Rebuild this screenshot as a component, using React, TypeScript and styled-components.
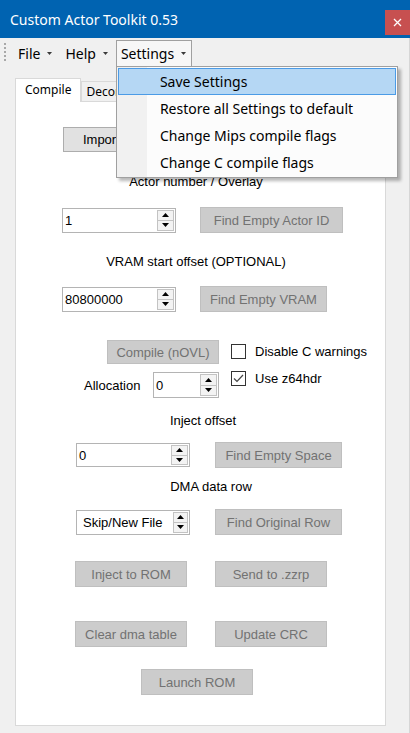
import React from "react";
import styled, { createGlobalStyle } from "styled-components";

const GlobalStyle = createGlobalStyle`
  html, body { margin: 0; padding: 0; background: #f0f0f0; }
  body { overflow: hidden; }
  *, *::before, *::after { box-sizing: border-box; }
`;

const UI = `"Noto Sans", "Open Sans", sans-serif`;
const FORM = `"Liberation Sans", Arial, sans-serif`;

const Window = styled.div`
  width: 410px;
  height: 733px;
  display: flex;
  flex-direction: column;
  background: #f0f0f0;
  overflow: hidden;
`;

const TitleBar = styled.header`
  flex: none;
  height: 38px;
  display: flex;
  align-items: flex-start;
  background: #0063b1;
  color: #fff;
  font-family: ${UI};
  font-size: 14px;
`;

const Title = styled.div`
  flex: 1;
  padding: 2px 0 0 10px;
  line-height: 36px;
  white-space: nowrap;
`;

const CloseButton = styled.div`
  width: 25px;
  height: 25px;
  margin-top: 10px;
  background: #c75050;
  display: grid;
  place-items: center;
`;

const Body = styled.div`
  flex: 1;
  display: flex;
  flex-direction: column;
  border-right: 1px solid #d6d6d6;
  min-height: 0;
`;

const MenuBar = styled.nav`
  flex: none;
  height: 32px;
  display: flex;
  align-items: flex-start;
  padding: 2px 0 0 4px;
  font-family: ${UI};
  font-size: 14px;
  color: #000;
  position: relative;
  z-index: 5;
`;

const Grip = styled.div`
  width: 2px;
  height: 19px;
  margin: 3px 7px 0 0;
  background: repeating-linear-gradient(to bottom, #a8a8a8 0 2px, transparent 2px 4px);
`;

const MenuItem = styled.div<{ $open?: boolean }>`
  position: relative;
  display: flex;
  align-items: center;
  gap: 7px;
  height: 27px;
  padding: 0 5px 0 4px;
  margin-right: 2px;
  line-height: 25px;
  border: 1px solid ${(p) => (p.$open ? "#a0a0a0" : "transparent")};
  border-bottom-color: transparent;
  background: ${(p) => (p.$open ? "#f7f7f7" : "transparent")};
  white-space: nowrap;
`;

const Dropdown = styled.div`
  position: absolute;
  top: 25px;
  left: -1px;
  width: 282px;
  padding: 1px;
  border: 1px solid #a0a0a0;
  background: linear-gradient(to right, #f1f1f1 0, #f1f1f1 30px, #fcfcfc 30px);
  box-shadow: 3px 3px 3px rgba(0, 0, 0, 0.28);
  display: flex;
  flex-direction: column;
`;

const DropItem = styled.div<{ $active?: boolean }>`
  height: 27px;
  padding-left: 41px;
  line-height: 25px;
  border: 1px solid ${(p) => (p.$active ? "#4b9be6" : "transparent")};
  background: ${(p) => (p.$active ? "#b5d7f4" : "transparent")};
  white-space: nowrap;
`;

const TabArea = styled.div`
  flex: 1;
  display: flex;
  flex-direction: column;
  padding: 8px 23px 7px 15px;
  min-height: 0;
`;

const TabStrip = styled.div`
  flex: none;
  height: 23px;
  display: flex;
  align-items: flex-end;
  position: relative;
  z-index: 1;
  font-family: ${UI};
  font-size: 12px;
  color: #000;
`;

const Tab = styled.div<{ $active?: boolean }>`
  height: ${(p) => (p.$active ? 24 : 20)}px;
  margin-bottom: ${(p) => (p.$active ? -1 : 0)}px;
  padding: ${(p) => (p.$active ? "0 9px" : "1px 8px 0 4px")};
  line-height: ${(p) => (p.$active ? 22 : 18)}px;
  background: ${(p) => (p.$active ? "#ffffff" : "#f0f0f0")};
  border: 1px solid #d9d9d9;
  border-bottom: none;
  margin-left: ${(p) => (p.$active ? 0 : 0)}px;
  white-space: nowrap;
`;

const Panel = styled.section`
  flex: 1;
  display: flex;
  flex-direction: column;
  background: #fff;
  border: 1px solid #d9d9d9;
  font-family: ${FORM};
  font-size: 13px;
  color: #000;
`;

const Row = styled.div<{ $mt: number; $pl: number; $gap?: number }>`
  display: flex;
  align-items: center;
  margin-top: ${(p) => p.$mt}px;
  padding-left: ${(p) => p.$pl}px;
  gap: ${(p) => p.$gap ?? 0}px;
`;

const Caption = styled.div<{ $mt: number; $cx: number }>`
  width: 300px;
  margin-top: ${(p) => p.$mt}px;
  margin-left: ${(p) => p.$cx - 150}px;
  text-align: center;
  line-height: 16px;
  white-space: nowrap;
`;

const Button = styled.button<{ $w: number; $h?: number }>`
  width: ${(p) => p.$w}px;
  height: ${(p) => p.$h ?? 26}px;
  padding: 0;
  font-family: ${FORM};
  font-size: 13px;
  text-align: center;
  white-space: nowrap;
  overflow: hidden;
  background: #e1e1e1;
  border: 1px solid #adadad;
  color: #000;
  &:disabled {
    background: #cccccc;
    border-color: #bfbfbf;
    color: #727272;
  }
`;

const Spinner = styled.div<{ $w: number; $h?: number }>`
  width: ${(p) => p.$w}px;
  height: ${(p) => p.$h ?? 25}px;
  display: flex;
  border: 1px solid #b4b4b4;
  background: #fff;
`;

const SpinValue = styled.div<{ $pad?: number }>`
  flex: 1;
  padding-left: ${(p) => p.$pad ?? 2}px;
  display: flex;
  align-items: center;
  white-space: nowrap;
  overflow: hidden;
`;

const SpinButtons = styled.div<{ $w?: number }>`
  width: ${(p) => p.$w ?? 17}px;
  margin: 1px 1px 1px 0;
  display: flex;
  flex-direction: column;
  border: 1px solid #c3c3c3;
  background: #f3f3f3;
`;

const SpinHalf = styled.div<{ $down?: boolean }>`
  flex: 1;
  display: grid;
  place-items: center;
  border-top: ${(p) => (p.$down ? "1px solid #c3c3c3" : "none")};
`;

const CompileBlock = styled.div`
  display: flex;
  margin-top: 28px;
  padding-left: 68px;
  gap: 12px;
`;

const LeftCol = styled.div`
  width: 135px;
  display: flex;
  flex-direction: column;
  align-items: flex-end;
  gap: 8px;
`;

const AllocRow = styled.div`
  width: 100%;
  display: flex;
  align-items: center;
  justify-content: space-between;
`;

const RightCol = styled.div`
  display: flex;
  flex-direction: column;
  gap: 12px;
  padding-top: 4px;
`;

const CheckRow = styled.label`
  display: flex;
  align-items: center;
  gap: 9px;
  height: 15px;
  white-space: nowrap;
`;

const CheckBox = styled.span`
  width: 15px;
  height: 15px;
  border: 1px solid #333;
  background: #fff;
  display: grid;
  place-items: center;
`;

const Caret = () => (
  <svg width="5" height="3" viewBox="0 0 5 3">
    <polygon points="0,0 5,0 2.5,3" fill="#3a3a3a" />
  </svg>
);

const Arrow = ({ down }: { down?: boolean }) => (
  <svg width="7" height="4" viewBox="0 0 7 4">
    <polygon points={down ? "0,0 7,0 3.5,4" : "0,4 7,4 3.5,0"} fill="#000" />
  </svg>
);

const NumericField = ({
  value,
  w,
  h,
  pad,
  spinW,
}: {
  value: string;
  w: number;
  h?: number;
  pad?: number;
  spinW?: number;
}) => (
  <Spinner $w={w} $h={h}>
    <SpinValue $pad={pad}>{value}</SpinValue>
    <SpinButtons $w={spinW}>
      <SpinHalf>
        <Arrow />
      </SpinHalf>
      <SpinHalf $down>
        <Arrow down />
      </SpinHalf>
    </SpinButtons>
  </Spinner>
);

const Check = ({ label, checked }: { label: string; checked?: boolean }) => (
  <CheckRow>
    <CheckBox>
      {checked && (
        <svg width="11" height="9" viewBox="0 0 11 9">
          <polyline points="1,4.5 4,7.5 10,1" fill="none" stroke="#444" strokeWidth="1.2" />
        </svg>
      )}
    </CheckBox>
    {label}
  </CheckRow>
);

const menuItems = [
  "Save Settings",
  "Restore all Settings to default",
  "Change Mips compile flags",
  "Change C compile flags",
];

export default function App() {
  return (
    <>
      <GlobalStyle />
      <Window>
        <TitleBar>
          <Title>Custom Actor Toolkit 0.53</Title>
          <CloseButton>
            <svg width="9" height="9" viewBox="0 0 9 9">
              <path d="M1 1L8 8M8 1L1 8" stroke="#fff" strokeWidth="1.3" />
            </svg>
          </CloseButton>
        </TitleBar>
        <Body>
          <MenuBar>
            <Grip />
            <MenuItem>
              File
              <Caret />
            </MenuItem>
            <MenuItem>
              Help
              <Caret />
            </MenuItem>
            <MenuItem $open>
              Settings
              <Caret />
              <Dropdown>
                {menuItems.map((m, i) => (
                  <DropItem key={m} $active={i === 0}>
                    {m}
                  </DropItem>
                ))}
              </Dropdown>
            </MenuItem>
          </MenuBar>
          <TabArea>
            <TabStrip>
              <Tab $active>Compile</Tab>
              <Tab>Decompile</Tab>
            </TabStrip>
            <Panel>
              <Row $mt={25} $pl={47}>
                <Button $w={110} $h={25}>
                  Import C file
                </Button>
              </Row>
              <Caption $mt={22} $cx={180}>
                Actor number / Overlay
              </Caption>
              <Row $mt={17} $pl={46} $gap={24}>
                <NumericField value="1" w={114} />
                <Button disabled $w={143}>
                  Find Empty Actor ID
                </Button>
              </Row>
              <Caption $mt={21} $cx={180}>
                VRAM start offset (OPTIONAL)
              </Caption>
              <Row $mt={16} $pl={46} $gap={24}>
                <NumericField value="80800000" w={114} />
                <Button disabled $w={127}>
                  Find Empty VRAM
                </Button>
              </Row>
              <CompileBlock>
                <LeftCol>
                  <Button disabled $w={112} $h={24}>
                    Compile (nOVL)
                  </Button>
                  <AllocRow>
                    <span>Allocation</span>
                    <NumericField value="0" w={66} h={26} />
                  </AllocRow>
                </LeftCol>
                <RightCol>
                  <Check label="Disable C warnings" />
                  <Check label="Use z64hdr" checked />
                </RightCol>
              </CompileBlock>
              <Caption $mt={15} $cx={187}>
                Inject offset
              </Caption>
              <Row $mt={13} $pl={60} $gap={25}>
                <NumericField value="0" w={114} h={24} />
                <Button disabled $w={127}>
                  Find Empty Space
                </Button>
              </Row>
              <Caption $mt={11} $cx={195}>
                DMA data row
              </Caption>
              <Row $mt={14} $pl={60} $gap={25}>
                <NumericField value="Skip/New File" w={114} pad={6} spinW={15} />
                <Button disabled $w={127}>
                  Find Original Row
                </Button>
              </Row>
              <Row $mt={26} $pl={59} $gap={28}>
                <Button disabled $w={112}>
                  Inject to ROM
                </Button>
                <Button disabled $w={112}>
                  Send to .zzrp
                </Button>
              </Row>
              <Row $mt={34} $pl={59} $gap={28}>
                <Button disabled $w={112}>
                  Clear dma table
                </Button>
                <Button disabled $w={112}>
                  Update CRC
                </Button>
              </Row>
              <Row $mt={22} $pl={125}>
                <Button disabled $w={112}>
                  Launch ROM
                </Button>
              </Row>
            </Panel>
          </TabArea>
        </Body>
      </Window>
    </>
  );
}
